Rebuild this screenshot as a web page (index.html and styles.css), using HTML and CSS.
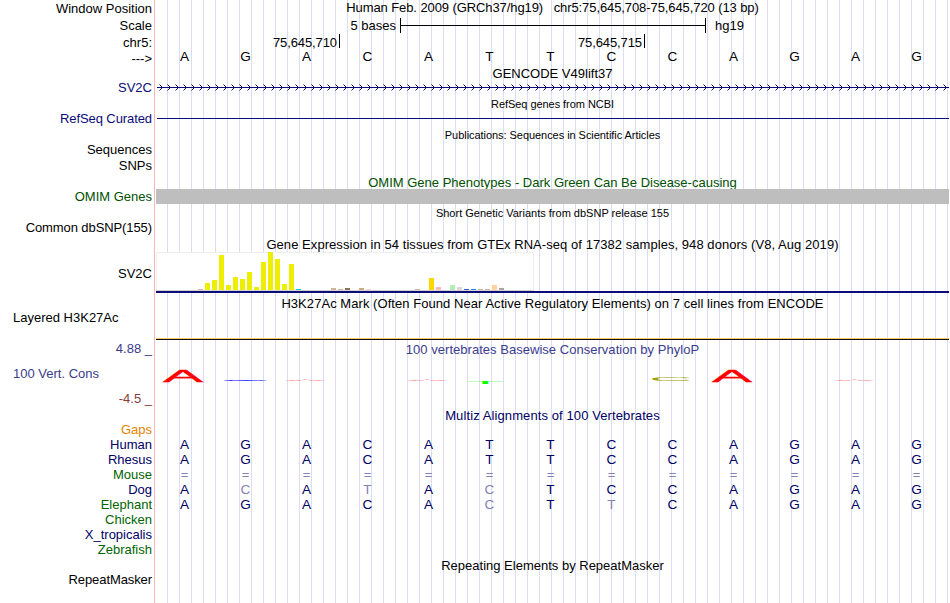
FILE: index.html
```
<!DOCTYPE html>
<html lang="en">
<head>
<meta charset="utf-8">
<title>Genome Browser</title>
<link rel="stylesheet" href="styles.css">
</head>
<body>
<main class="browser">
<div class="row h17"><div class="label">Window Position</div><div class="title t-pos up">Human Feb. 2009 (GRCh37/hg19)   chr5:75,645,708-75,645,720 (13 bp)</div></div>
<div class="row h17"><div class="label">Scale</div><div class="scale"><span class="scale-name">5 bases</span><span class="scale-bar"></span><span>hg19</span></div></div>
<div class="row h16"><div class="label">chr5:</div><div class="ticks"><span class="tick">75,645,710</span><span class="tick">75,645,715</span></div></div>
<div class="row h16"><div class="label">---&gt;</div><div class="bases black ruler"><b>A</b><b>G</b><b>A</b><b>C</b><b>A</b><b>T</b><b>T</b><b>C</b><b>C</b><b>A</b><b>G</b><b>A</b><b>G</b></div></div>
<div class="row h15"><div class="title t-gencode">GENCODE V49lift37</div></div>
<div class="row h15"><div class="label navy up">SV2C</div>
<svg class="track" width="793" height="15"><defs><pattern id="chev" x="0" y="0" width="8" height="15" patternUnits="userSpaceOnUse"><path d="M3.5 3.5L6.5 6.5L3.5 9.5" fill="none" stroke="#0c0c78"/></pattern></defs><rect x="1" y="6" width="792" height="1" fill="#0c0c78"/><rect x="1" width="792" height="15" fill="url(#chev)"/></svg></div>
<div class="row h16"><div class="title small t-refseq">RefSeq genes from NCBI</div></div>
<div class="row h15"><div class="label navy up t-curated">RefSeq Curated</div><div class="gene-line"></div></div>
<div class="row h16"><div class="title small t-pub">Publications: Sequences in Scientific Articles</div></div>
<div class="row h15"><div class="label up">Sequences</div></div>
<div class="row h16"><div class="label up">SNPs</div></div>
<div class="row h15"><div class="title green t-omim down">OMIM Gene Phenotypes - Dark Green Can Be Disease-causing</div></div>
<div class="row h15"><div class="label green">OMIM Genes</div><div class="omim-bar"></div></div>
<div class="row h17"><div class="title small t-snp down">Short Genetic Variants from dbSNP release 155</div></div>
<div class="row h15"><div class="label up t-common">Common dbSNP(155)</div></div>
<div class="row h16"><div class="title t-gtex">Gene Expression in 54 tissues from GTEx RNA-seq of 17382 samples, 948 donors (V8, Aug 2019)</div></div>
<div class="row h41"><div class="label down">SV2C</div>
<svg class="track" width="793" height="41" shape-rendering="crispEdges">
<rect width="378" height="39" fill="#eee"/><rect x="1" y="1" width="376" height="37" fill="#fff"/>
<rect y="38" width="378" height="1" fill="#d3d3d3"/>
<g fill="#eeee00"><rect x="49" y="31" width="5" height="7"/><rect x="56" y="28" width="5" height="10"/><rect x="63" y="3" width="5" height="35"/><rect x="70" y="33" width="5" height="5"/><rect x="77" y="25" width="5" height="13"/><rect x="84" y="27" width="5" height="11"/><rect x="91" y="20" width="5" height="18"/><rect x="98" y="35" width="5" height="3"/><rect x="105" y="10" width="5" height="28"/><rect x="112" y="0" width="5" height="38"/><rect x="119" y="7" width="5" height="31"/><rect x="126" y="32" width="5" height="6"/><rect x="133" y="12" width="5" height="26"/></g>
<g fill="#cdb79e"><rect x="42" y="37" width="5" height="1"/><rect x="175" y="36" width="5" height="2"/><rect x="182" y="37" width="5" height="1"/><rect x="259" y="37" width="5" height="1"/><rect x="322" y="37" width="5" height="1"/><rect x="329" y="37" width="5" height="1"/></g>
<rect x="140" y="37" width="5" height="1" fill="#00cdcd"/><rect x="189" y="36" width="5" height="2" fill="#8b7355"/><rect x="203" y="36" width="5" height="2" fill="#cdaa7d"/><rect x="210" y="37" width="5" height="1" fill="#eed5d2"/>
<rect x="273" y="26" width="5" height="12" fill="#ffd700"/><rect x="280" y="35" width="5" height="3" fill="#ffb6c1"/><rect x="294" y="33" width="5" height="5" fill="#b4eeb4"/><rect x="301" y="35" width="5" height="3" fill="#d9d9d9"/><rect x="308" y="37" width="5" height="1" fill="#3a5fcd"/><rect x="315" y="37" width="5" height="1" fill="#1e90ff"/><rect x="336" y="33" width="5" height="5" fill="#ffd39b"/><rect x="343" y="36" width="5" height="2" fill="#a6a6a6"/>
<rect y="39" width="793" height="2" fill="#0c0c78"/>
</svg></div>
<div class="row h18 h3k"><div class="title t-h3k">H3K27Ac Mark (Often Found Near Active Regulatory Elements) on 7 cell lines from ENCODE</div></div>
<div class="row h29 acetyl"><div class="label left">Layered H3K27Ac</div><div class="signal"></div></div>
<div class="row h19"><div class="label slate up">4.88 _</div><div class="title slate t-phylo">100 vertebrates Basewise Conservation by PhyloP</div></div>
<div class="row h31"><div class="label left slate up">100 Vert. Cons</div>
<svg class="track logo" width="793" height="31">
<text class="tall" transform="translate(6.9 22.6) scale(6 1.66)" fill="#f00">A</text>
<text class="flat-g" transform="translate(65.5 21.6) scale(6.3 .25)" fill="#00f">G</text>
<text class="flat-a" transform="translate(129 22) scale(6 .22)" fill="#f00">A</text>
<text class="flat-a" transform="translate(251 22) scale(6 .22)" fill="#f00">A</text>
<text transform="translate(310 25.4) scale(6.3 .35)" fill="#0f0">T</text>
<text transform="translate(493 21.7) scale(6 .58)" fill="#a0a000">C</text>
<text class="tall" transform="translate(555.9 22.6) scale(6 1.66)" fill="#f00">A</text>
<text class="flat-a" transform="translate(678 22) scale(6 .22)" fill="#f00">A</text>
</svg></div>
<div class="row h18"><div class="label maroon up">-4.5 _</div></div>
<div class="row h14"><div class="title ink t-multiz">Multiz Alignments of 100 Vertebrates</div></div>
<div class="row h15"><div class="label orange">Gaps</div></div>
<div class="row h15"><div class="label ink">Human</div><div class="bases ink"><b>A</b><b>G</b><b>A</b><b>C</b><b>A</b><b>T</b><b>T</b><b>C</b><b>C</b><b>A</b><b>G</b><b>A</b><b>G</b></div></div>
<div class="row h15"><div class="label ink">Rhesus</div><div class="bases ink"><b>A</b><b>G</b><b>A</b><b>C</b><b>A</b><b>T</b><b>T</b><b>C</b><b>C</b><b>A</b><b>G</b><b>A</b><b>G</b></div></div>
<div class="row h15"><div class="label forest">Mouse</div><div class="bases faint equals"><b>=</b><b>=</b><b>=</b><b>=</b><b>=</b><b>=</b><b>=</b><b>=</b><b>=</b><b>=</b><b>=</b><b>=</b><b>=</b></div></div>
<div class="row h15"><div class="label ink">Dog</div><div class="bases ink"><b>A</b><b class="faint">C</b><b>A</b><b class="faint">T</b><b>A</b><b class="faint">C</b><b>T</b><b>C</b><b>C</b><b>A</b><b>G</b><b>A</b><b>G</b></div></div>
<div class="row h15"><div class="label forest">Elephant</div><div class="bases ink"><b>A</b><b>G</b><b>A</b><b>C</b><b>A</b><b class="faint">C</b><b>T</b><b class="faint">T</b><b>C</b><b>A</b><b>G</b><b>A</b><b>G</b></div></div>
<div class="row h15"><div class="label forest">Chicken</div></div>
<div class="row h15"><div class="label ink">X_tropicalis</div></div>
<div class="row h15"><div class="label forest">Zebrafish</div></div>
<div class="row h16"><div class="title t-rep">Repeating Elements by RepeatMasker</div></div>
<div class="row h15"><div class="label up t-mask">RepeatMasker</div></div>
</main>
</body>
</html>
```
FILE: styles.css
```
body { margin: 0; background: #fff; }
.browser {
  width: 950px; height: 603px; overflow: hidden;
  font: 13px/15px "Liberation Sans", Arial, sans-serif; color: #000;
  background:
    linear-gradient(#ffb4b4, #ffb4b4) 154px 0 / 1px 100% no-repeat,
    repeating-linear-gradient(90deg, #dcdcf5 0 1px, transparent 1px 12px) 167px 0 / 782px 100% no-repeat;
}
.row { display: grid; grid-template-columns: 152px 793px; column-gap: 4px; align-items: center; }
.label { grid-column: 1; text-align: right; white-space: pre; }
.label.left { text-align: left; padding-left: 13px; }
.title { grid-column: 2; text-align: center; white-space: pre; }
.small { font-size: 11px; }
.up { margin: -1px 0 1px; }
.down { margin: 1px 0 -1px; }
.track { grid-column: 2; display: block; }
.h14 { height: 14px; } .h15 { height: 15px; } .h16 { height: 16px; } .h17 { height: 17px; }
.h18 { height: 18px; } .h19 { height: 19px; } .h29 { height: 29px; } .h31 { height: 31px; } .h41 { height: 41px; }
.navy { color: #0c0c78; }
.ink { color: #000064; }
.green { color: #005000; }
.forest { color: #006400; }
.slate { color: #3c3c8c; }
.maroon { color: #8c3c3c; }
.orange { color: #e68200; }
.faint { color: #8282b4; }

.t-pos { letter-spacing: -.09px; }
.t-refseq, .t-pub { letter-spacing: -.05px; }
.t-gtex, .t-h3k { letter-spacing: .054px; }
.t-phylo { letter-spacing: .03px; }
.t-multiz { letter-spacing: .1px; }
.t-common, .t-curated, .t-mask { letter-spacing: -.09px; }

.scale { display: flex; height: 15px; }
.scale-name { width: 240px; text-align: right; margin-right: 4px; }
.scale-bar { width: 304px; margin-right: 9px; border: solid #000; border-width: 0 1px; background: linear-gradient(#000, #000) 0 7px / 100% 1px no-repeat; }
.ticks { display: flex; height: 16px; line-height: 17px; }
.tick { width: 181px; padding-right: 2px; border-right: 1px solid #000; height: 14px; text-align: right; letter-spacing: -.1px; }
.tick + .tick { width: 302px; }

.bases { grid-column: 2; display: grid; grid-template-columns: repeat(13, 61px); margin-left: -2px; text-align: center; font-size: 13.6px; }
.bases b { font-weight: 400; }
.equals { font-size: 13px; }
.ruler { margin-top: -4px; }
.gene-line { height: 1px; margin: 0 0 2px 1px; background: #0c0c78; }
.omim-bar { height: 15px; background: #bebebe; }
.h3k { padding-top: 1px; }
.acetyl { height: 28px; align-items: stretch; }
.acetyl .label { margin-top: -2px; }
.signal { border-bottom: 1px solid #111; box-shadow: inset 0 -1px #ffc864; }
.logo text { font: 10px "Liberation Sans", Arial, sans-serif; }
.logo .tall { stroke: #f00; stroke-width: .18px; }
.logo .flat-a { stroke: #f00; stroke-width: .2px; opacity: .8; }
.logo .flat-g { stroke: #00f; stroke-width: .2px; }
```
